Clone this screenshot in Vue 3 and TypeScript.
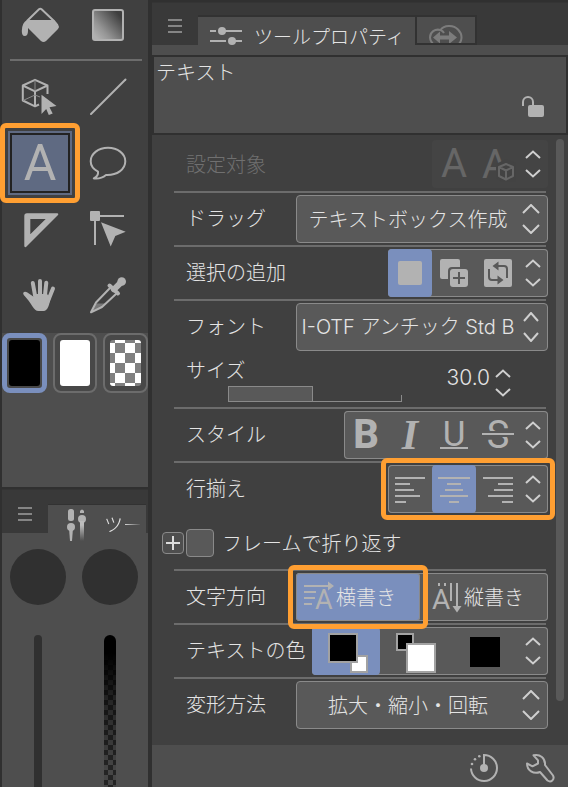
<script setup lang="ts">
import { computed, ref } from 'vue'

type Align = 'left' | 'center' | 'right'

const tool = ref('text')
const swatch = ref('main')
const selectionMode = ref('new')
const align = ref<Align>('center')
const direction = ref<'horizontal' | 'vertical'>('horizontal')
const colorMode = ref('main')
const wrapInFrame = ref(false)
const dragAction = ref('テキストボックス作成')
const font = ref('I-OTF アンチック Std B')
const transformMode = ref('拡大・縮小・回転')
const size = ref(30)
const sliderPosition = ref(49)

const sizeText = computed(() => size.value.toFixed(1))

const alignments: { id: Align; label: string; path: string }[] = [
  { id: 'left', label: '左揃え', path: 'M1 3H31M1 9H16M1 15H20M1 21H26M1 27H12' },
  { id: 'center', label: '中央揃え', path: 'M0 3H32M9 9H23M7 15H25M2 21H30M11 27H21' },
  { id: 'right', label: '右揃え', path: 'M1 3H31M16 9H31M12 15H31M6 21H31M20 27H31' },
]
</script>

<template>
  <div class="workspace">
    <div class="left">
      <section class="toolbox">
        <div class="tools tools-top">
          <button class="tool" aria-label="塗りつぶし">
            <svg class="icon40" viewBox="0 0 40 40">
              <path class="fill" d="M7 15H34.5L38 19.3Q39.8 21.7 38 24L26 36Q23.5 38.2 21 36L8 23V26Q8 31 4.7 31Q1.8 31 1.8 26Q2 17.5 7 15Z" />
              <path class="line" d="M7 16 19 4.300Q20.300 3.200 21.600 4.300L34 16" />
            </svg>
          </button>
          <button class="tool" aria-label="グラデーション">
            <svg class="icon40" viewBox="0 0 40 40">
              <defs>
                <linearGradient id="toolGradient" x1="0.1" y1="0.9" x2="0.9" y2="0.2">
                  <stop offset="0" stop-color="#b0b0b0" />
                  <stop offset="0.3" stop-color="#959595" />
                  <stop offset="1" stop-color="#3e3e3e" />
                </linearGradient>
              </defs>
              <rect x="5" y="5" width="30" height="30" rx="2" fill="url(#toolGradient)" stroke="#b2b2b2" stroke-width="2" />
            </svg>
          </button>
        </div>
        <hr class="divider" />
        <div class="tools">
          <button class="tool" aria-label="3D操作">
            <svg class="icon40" viewBox="0 0 40 40">
              <path class="line" stroke-linejoin="round" d="M27.500 17V8.500L15 2.800 2.800 8.500V23.500L15 29.300 19 27.500M2.800 8.500 15 14.300 27.500 8.500M15 14.300V29" />
              <path class="hair" d="M15 3V14M3 23.500 15 18 20 20" />
              <path class="fill" d="M21.500 17.700 36.500 29 29.500 30.200 32.700 36.500 28.800 38 26.200 32 21.500 37Z" />
            </svg>
          </button>
          <button class="tool" aria-label="直線">
            <svg class="icon40" viewBox="0 0 40 40"><path class="line" stroke-linecap="round" d="M3 37 37.500 2.500" /></svg>
          </button>
          <button class="tool" :class="{ current: tool === 'text', marked: tool === 'text' }" aria-label="テキスト" @click="tool = 'text'">
            <span class="tool-letter">A</span>
          </button>
          <button class="tool" aria-label="フキダシ">
            <svg class="icon40" viewBox="0 0 40 40">
              <path class="line" stroke-linejoin="round" d="M18 32C29 32.500 37.300 26.500 37.300 18.300C37.300 10.500 29.500 4.800 20 4.800S2.700 10.500 2.700 18.300C2.700 22.500 5.500 26.300 10 28.600C10.500 32 8.500 34 5.800 35.400C10 36 15 34.500 18 32Z" />
            </svg>
          </button>
          <button class="tool" aria-label="定規">
            <svg class="icon40" viewBox="0 0 40 40">
              <path class="fill" fill-rule="evenodd" d="M7 4.300H37.500Q39 5 38 6L6 38Q4.300 38.500 4.300 37V7Q4.300 4.300 7 4.300ZM10.300 10V25.300L25.700 10Z" />
            </svg>
          </button>
          <button class="tool" aria-label="オブジェクト">
            <svg class="icon40" viewBox="0 0 40 40">
              <rect class="fill" x="2" y="2" width="10" height="10" rx="1" />
              <path class="line" d="M7 7H36M7 7V36" />
              <path class="fill" d="M13 13.300 37.700 22.700 27.300 27 22.700 37.500Z" />
            </svg>
          </button>
          <button class="tool" aria-label="手のひら">
            <svg class="icon40" viewBox="0 0 40 40">
              <path class="finger" d="M12.800 8 15.300 22M20 6V22M26.300 7.800 24.800 22M33 13.500 28 26" />
              <path class="fill" d="M13.500 19H27L30.500 23C29.500 29 28 36 23.500 36H18.500C13.500 36 12 28.500 3.800 20C2 17.500 4.500 15.800 7 17.300L14 22Z" />
            </svg>
          </button>
          <button class="tool" aria-label="スポイト">
            <svg class="icon40" viewBox="0 0 40 40">
              <path class="shade" d="M8 28.500H17L14 31.500 4 36.500Z" />
              <path class="line" stroke-linejoin="round" d="M22 13 8 27.500 3 37.300 14 32 28.500 18.500" />
              <path d="M26 14.300 34 6.500" stroke="#b2b2b2" stroke-width="6" stroke-linecap="round" />
              <path d="M21.500 10.500 30 18.500" stroke="#b2b2b2" stroke-width="4" stroke-linecap="round" />
              <circle class="fill" cx="33.700" cy="6.500" r="4.300" />
            </svg>
          </button>
        </div>
        <div class="colors">
          <button class="swatch" :class="{ chosen: swatch === 'main' }" aria-label="メインカラー" @click="swatch = 'main'"><span class="chip black"></span></button>
          <button class="swatch" :class="{ chosen: swatch === 'sub' }" aria-label="サブカラー" @click="swatch = 'sub'"><span class="chip white"></span></button>
          <button class="swatch" :class="{ chosen: swatch === 'clear' }" aria-label="透明色" @click="swatch = 'clear'"><span class="chip clear"></span></button>
        </div>
      </section>

      <section class="quick">
        <header class="tabs quick-tabs">
          <button class="menu" aria-label="メニュー"><svg width="14" height="14" viewBox="0 0 14 14"><path d="M0 1H14M0 7H14M0 13H14" /></svg></button>
          <button class="tab quick-tab">
            <svg width="20" height="34" viewBox="0 0 20 34">
              <defs>
                <linearGradient id="fadeDown" x1="0" y1="0" x2="0" y2="1">
                  <stop offset="0.2" stop-color="#bdbdbd" />
                  <stop offset="1" stop-color="#bdbdbd" stop-opacity="0" />
                </linearGradient>
              </defs>
              <rect class="fill" x="2" y="1" width="6" height="12" rx="2.500" />
              <circle class="fill" cx="5" cy="19" r="4" />
              <path class="fill" d="M3 20H7L6 33H4Z" />
              <path class="fill" d="M14 5V3Q16 0 18 3V5Z" />
              <circle class="fill" cx="16" cy="11" r="4" />
              <rect x="14" y="13" width="4" height="20" fill="url(#fadeDown)" />
            </svg>
            <span class="fading">ツー</span>
          </button>
        </header>
        <div class="channels">
          <div class="channel">
            <button class="dial" aria-label="ブラシサイズ"></button>
            <input class="vertical plain" type="range" aria-label="ブラシサイズ" />
          </div>
          <div class="channel">
            <button class="dial" aria-label="不透明度"></button>
            <input class="vertical opacity" type="range" aria-label="不透明度" />
          </div>
        </div>
      </section>
    </div>

    <main class="property">
      <header class="tabs">
        <button class="menu" aria-label="メニュー"><svg width="14" height="14" viewBox="0 0 14 14"><path d="M0 1H14M0 7H14M0 13H14" /></svg></button>
        <button class="tab main-tab">
          <svg width="32" height="20" viewBox="0 0 32 20">
            <path class="line" d="M0 5H6M10 5H32M0 15H16M22 15H32" />
            <circle class="fill" cx="12" cy="5" r="4" />
            <circle class="fill" cx="22" cy="15" r="4" />
          </svg>
          <span>ツールプロパティ</span>
        </button>
        <button class="tab cloud-tab" aria-label="クラウド">
          <svg width="34" height="24" viewBox="0 0 34 24">
            <path fill="none" stroke="#7c7c7c" stroke-width="2" d="M10 21C5 21 1 17 1 12.500C1 7 6 3.500 11.500 5C15 0 24 -.5 29 4.500C35 10.500 33 21 24 21M11.500 5Q14 6 15 8" />
            <path fill="#7c7c7c" d="M4 12.500 11 6.500V10.500H20V6L28 12.500 20 19V14.500H11V18.500Z" />
          </svg>
        </button>
      </header>

      <section class="preview">
        <span class="preview-name">テキスト</span>
        <button class="lock" aria-label="ロック">
          <svg width="24" height="24" viewBox="0 0 24 24">
            <path class="line" d="M2 12V8A5 5 0 0 1 12 8V12" />
            <rect class="fill" x="7" y="11" width="16" height="12" rx="2" />
          </svg>
        </button>
      </section>

      <section class="panel">
        <div class="rows">
          <div class="row first">
            <span class="label off">設定対象</span>
            <div class="group dim">
              <button class="cell letter" disabled>A</button>
              <button class="cell" disabled aria-label="3Dテキスト">
                <svg width="36" height="48" viewBox="0 -6 36 48">
                  <text class="svg-letter" x="2" y="32" font-size="40" fill="#666">A</text>
                  <path fill="#434343" d="M26 13 36 17V36H22L16 32V18Z" />
                  <path fill="none" stroke="#666" stroke-width="2" stroke-linejoin="round" d="M26 18 33 21V30L26 33.500 19 30V21ZM19 21 26 24.500 33 21M26 24.500V33" />
                </svg>
              </button>
              <span class="stepper">
                <button aria-label="前へ"><svg viewBox="0 0 16 9"><path d="M1 8 8 1.500 15 8" /></svg></button>
                <button aria-label="次へ"><svg viewBox="0 0 16 9"><path d="M1 1 8 7.500 15 1" /></svg></button>
              </span>
            </div>
          </div>

          <div class="row">
            <label class="label" for="drag">ドラッグ</label>
            <div class="select-box">
              <select id="drag" v-model="dragAction"><option>テキストボックス作成</option></select>
              <svg class="arrows" viewBox="0 0 18 30"><path d="M1 9 9 1 17 9M1 21 9 29 17 21" /></svg>
            </div>
          </div>

          <div class="row">
            <span class="label">選択の追加</span>
            <div class="group">
              <button class="cell" :class="{ on: selectionMode === 'new' }" aria-label="新規選択" @click="selectionMode = 'new'">
                <svg width="24" height="24" viewBox="0 0 24 24"><rect class="fill" width="24" height="24" rx="2" /></svg>
              </button>
              <button class="cell" :class="{ on: selectionMode === 'add' }" aria-label="追加選択" @click="selectionMode = 'add'">
                <svg width="28" height="28" viewBox="0 0 28 28">
                  <rect class="fill" width="20" height="20" rx="2" />
                  <rect x="8" y="8" width="20" height="20" rx="4" fill="#595959" />
                  <rect class="fill" x="10" y="10" width="18" height="18" rx="3" />
                  <path d="M13 19H25M19 13V25" stroke="#595959" stroke-width="2" />
                </svg>
              </button>
              <button class="cell" :class="{ on: selectionMode === 'toggle' }" aria-label="選択切り替え" @click="selectionMode = 'toggle'">
                <svg width="28" height="28" viewBox="0 0 28 28">
                  <rect class="fill" width="28" height="28" rx="2" />
                  <path d="M13 7H20Q23 7 23 10V19M5 10V18Q5 21 8 21H15" fill="none" stroke="#595959" stroke-width="2" />
                  <path fill="#595959" d="M8.500 7 14.500 2.500V11.500ZM19.500 21 13.500 16.500V25.500Z" />
                </svg>
              </button>
              <span class="stepper">
                <button aria-label="前へ"><svg viewBox="0 0 16 9"><path d="M1 8 8 1.500 15 8" /></svg></button>
                <button aria-label="次へ"><svg viewBox="0 0 16 9"><path d="M1 1 8 7.500 15 1" /></svg></button>
              </span>
            </div>
          </div>

          <div class="row">
            <label class="label" for="font">フォント</label>
            <div class="select-box">
              <select id="font" v-model="font" class="font-select"><option>I-OTF アンチック Std B</option></select>
              <svg class="arrows" viewBox="0 0 18 30"><path d="M2 9 9 1 16 9M2 21 9 29 16 21" /></svg>
            </div>
          </div>

          <div class="row size-row">
            <div class="size-main">
              <label class="label" for="size">サイズ</label>
              <div class="size-track">
                <span class="size-fill" :style="{ width: sliderPosition + '%' }"></span>
                <input id="size" v-model.number="sliderPosition" type="range" min="0" max="100" />
              </div>
            </div>
            <output class="number" for="size">{{ sizeText }}</output>
            <span class="stepper">
              <button aria-label="増やす" @click="size += 1"><svg viewBox="0 0 16 9"><path d="M1 8 8 1.500 15 8" /></svg></button>
              <button aria-label="減らす" @click="size -= 1"><svg viewBox="0 0 16 9"><path d="M1 1 8 7.500 15 1" /></svg></button>
            </span>
          </div>

          <div class="row">
            <span class="label">スタイル</span>
            <div class="group">
              <button class="cell letter bold">B</button>
              <button class="cell letter italic">I</button>
              <button class="cell" aria-label="下線">
                <svg width="32" height="48" viewBox="0 0 32 48">
                  <text class="svg-letter" x="16" y="35" font-size="35" text-anchor="middle" fill="#b2b2b2">U</text>
                  <path class="line" d="M2 37H30" />
                </svg>
              </button>
              <button class="cell" aria-label="取り消し線">
                <svg width="32" height="48" viewBox="0 0 32 48">
                  <text class="svg-letter" x="16" y="37" font-size="38" text-anchor="middle" fill="#b2b2b2">S</text>
                  <path stroke="#595959" stroke-width="6" d="M2 23H30" />
                  <path class="line" d="M0 23H32" />
                </svg>
              </button>
              <span class="stepper">
                <button aria-label="前へ"><svg viewBox="0 0 16 9"><path d="M1 8 8 1.500 15 8" /></svg></button>
                <button aria-label="次へ"><svg viewBox="0 0 16 9"><path d="M1 1 8 7.500 15 1" /></svg></button>
              </span>
            </div>
          </div>

          <div class="row">
            <span class="label">行揃え</span>
            <div class="group marked">
              <button v-for="item in alignments" :key="item.id" class="cell" :class="{ on: align === item.id }" :aria-label="item.label" @click="align = item.id">
                <svg width="32" height="28" viewBox="0 0 32 28"><path class="line" :d="item.path" /></svg>
              </button>
              <span class="stepper">
                <button aria-label="前へ"><svg viewBox="0 0 16 9"><path d="M1 8 8 1.500 15 8" /></svg></button>
                <button aria-label="次へ"><svg viewBox="0 0 16 9"><path d="M1 1 8 7.500 15 1" /></svg></button>
              </span>
            </div>
          </div>

          <div class="row frame-row">
            <button class="expand" aria-label="展開"><svg width="14" height="14" viewBox="0 0 14 14"><path d="M0 7H14M7 0V14" /></svg></button>
            <input id="frame" v-model="wrapInFrame" class="check" type="checkbox" />
            <label for="frame">フレームで折り返す</label>
          </div>

          <div class="row">
            <span class="label">文字方向</span>
            <div class="group wide">
              <button class="way across" :class="{ on: direction === 'horizontal', marked: direction === 'horizontal' }" @click="direction = 'horizontal'">
                <svg width="30" height="48" viewBox="0 -8 30 48">
                  <path class="line" d="M0 5H26M0 11H12M0 17H11M0 23H8" />
                  <path class="fill" d="M24 .5 30 5 24 9.500Z" />
                  <text class="svg-letter" x="11" y="28" font-size="27" fill="#b2b2b2">A</text>
                </svg>
                横書き
              </button>
              <button class="way down" :class="{ on: direction === 'vertical', marked: direction === 'vertical' }" @click="direction = 'vertical'">
                <svg width="30" height="48" viewBox="0 -8 30 48">
                  <path class="line" d="M7 2V5M13 2V5M19 2V20M25 2V27" />
                  <path class="fill" d="M20.500 25H29.500L25 31.500Z" />
                  <text class="svg-letter" x="0" y="28" font-size="28" fill="#b2b2b2">A</text>
                </svg>
                縦書き
              </button>
            </div>
          </div>

          <div class="row">
            <span class="label">テキストの色</span>
            <div class="group color-group">
              <button class="cell" :class="{ on: colorMode === 'main' }" aria-label="メインカラー" @click="colorMode = 'main'">
                <svg width="68" height="48" viewBox="0 0 68 48">
                  <rect x="39" y="29" width="16" height="16" fill="#fff" stroke="#a2a2a2" stroke-width="2" />
                  <rect x="17" y="7" width="28" height="28" fill="#000" stroke="#a2a2a2" stroke-width="2" />
                </svg>
              </button>
              <button class="cell" :class="{ on: colorMode === 'sub' }" aria-label="サブカラー" @click="colorMode = 'sub'">
                <svg width="68" height="48" viewBox="0 0 68 48">
                  <rect x="17" y="7" width="16" height="16" fill="#000" stroke="#a2a2a2" stroke-width="2" />
                  <rect x="27" y="17" width="28" height="28" fill="#fff" stroke="#a2a2a2" stroke-width="2" />
                </svg>
              </button>
              <button class="cell" :class="{ on: colorMode === 'user' }" aria-label="ユーザーカラー" @click="colorMode = 'user'">
                <svg width="68" height="48" viewBox="0 0 68 48"><rect x="22" y="10" width="30" height="30" fill="#000" /></svg>
              </button>
              <span class="stepper">
                <button aria-label="前へ"><svg viewBox="0 0 16 9"><path d="M1 8 8 1.500 15 8" /></svg></button>
                <button aria-label="次へ"><svg viewBox="0 0 16 9"><path d="M1 1 8 7.500 15 1" /></svg></button>
              </span>
            </div>
          </div>

          <div class="row">
            <label class="label" for="transform">変形方法</label>
            <div class="select-box">
              <select id="transform" v-model="transformMode"><option>拡大・縮小・回転</option></select>
              <svg class="arrows" viewBox="0 0 18 30"><path d="M1 9 9 1 17 9M1 21 9 29 17 21" /></svg>
            </div>
          </div>
        </div>
        <div class="scroll"><div class="thumb"></div></div>
      </section>

      <footer class="bottom">
        <button aria-label="初期設定に戻す">
          <svg width="30" height="30" viewBox="0 0 30 30">
            <path class="line" d="M15 15V2A13 13 0 1 1 2 15.500" />
            <circle class="fill" cx="15" cy="15" r="4" />
            <circle class="fill" cx="3" cy="11" r="1.300" /><circle class="fill" cx="6" cy="6.300" r="1.300" /><circle class="fill" cx="10.300" cy="3.200" r="1.300" />
          </svg>
        </button>
        <button aria-label="サブツール詳細">
          <svg width="30" height="30" viewBox="0 0 30 30">
            <path class="line" stroke-linejoin="round" d="M8.500 2.300C15 .8 20.500 5 20 12L28 22.500C30 26.500 26 30 22.500 27.500L15 19C8.500 21.500 2 17.500 2 10.500L7.500 13.300 13 10.500V7.300Z" />
          </svg>
        </button>
      </footer>
    </main>
  </div>
</template>

<style>
body {
  margin: 0;
  background: #303030;
}
</style>

<style scoped>
.workspace {
  display: flex;
  gap: 4px;
  box-sizing: border-box;
  min-height: 100vh;
  padding-left: 2px;
  background: #303030;
  color: #e4e4e4;
  font-family: "Noto Sans CJK JP", sans-serif;
  font-size: 20px;
  font-weight: 300;
  line-height: 24px;
}
button,
select,
input {
  margin: 0;
  padding: 0;
  border: 0;
  background: none;
  color: inherit;
  font: inherit;
}
svg {
  display: block;
  flex: none;
}
.fill {
  fill: #b2b2b2;
}
.line {
  fill: none;
  stroke: #b2b2b2;
  stroke-width: 2;
}
.hair {
  fill: none;
  stroke: #8a8a8a;
  stroke-width: 1;
}
.shade {
  fill: #777;
}
.finger {
  fill: none;
  stroke: #b2b2b2;
  stroke-width: 4;
  stroke-linecap: round;
}
.svg-letter {
  font-family: Roboto, sans-serif;
  font-weight: 400;
}

.left {
  display: flex;
  flex: none;
  flex-direction: column;
  width: 146px;
}
.toolbox {
  background: #404040;
}
.tools {
  display: grid;
  grid-template-columns: repeat(2, 64px);
  gap: 2px 4px;
  padding: 4px 6px 6px;
}
.tools-top {
  padding: 0 6px 9px;
}
.tools-top .tool {
  height: 50px;
}
.divider {
  height: 2px;
  margin: 0 6px 0 8px;
  border: 0;
  background: #6c6c6c;
}
.tool {
  display: flex;
  align-items: center;
  justify-content: center;
  height: 64px;
}
.icon40 {
  width: 40px;
  height: 40px;
}
.tool.current {
  border: 2px solid #5f6a82;
  background: #5f6a82;
  box-shadow: inset 0 0 0 2px #222;
}
.tool-letter {
  color: #b2b2b2;
  font: 400 50px/60px Roboto, sans-serif;
}
.marked {
  position: relative;
}
.marked::after {
  position: absolute;
  z-index: 2;
  inset: -8px;
  border: 5px solid #ff9f32;
  border-radius: 6px;
  content: "";
  pointer-events: none;
}
.tool.marked::after {
  inset: -10px;
}
.group.marked::after {
  inset: -7px;
}

.colors {
  display: flex;
  gap: 6px;
  height: 60px;
  padding-bottom: 94px;
  background: #4e4e4e;
}
.swatch {
  flex: 1;
  box-sizing: border-box;
  padding: 5px;
  border: 2px solid #6c6c6c;
  border-radius: 8px;
  background: #484848;
}
.swatch.chosen {
  padding: 2px;
  border: 5px solid #7a8fbd;
}
.chip {
  display: block;
  height: 100%;
  border-radius: 3px;
}
.black {
  background: #000;
}
.white {
  background: #fff;
}
.clear {
  background: conic-gradient(#808080 25%, #fff 0 50%, #808080 0 75%, #fff 0) -5px 3px / 20px 20px;
}

.quick {
  display: flex;
  flex: 1;
  flex-direction: column;
  margin-top: 3px;
  background: #4e4e4e;
}
.tabs {
  display: flex;
  align-items: flex-end;
  height: 42px;
  margin-top: 3px;
  background: #393939;
  box-shadow: 0 -1px #343434;
}
.quick-tabs {
  height: 43px;
  margin-top: 0;
}
.menu {
  align-self: flex-start;
  width: 46px;
  padding: 16px 16px 0;
}
.quick-tabs .menu {
  padding-top: 17px;
}
.menu svg {
  fill: none;
  stroke: #858585;
  stroke-width: 2;
}
.tab {
  display: flex;
  align-items: center;
  box-sizing: border-box;
  height: 28px;
  background: #4e4e4e;
  font-size: 19px;
}
.main-tab {
  gap: 12px;
  padding: 10px 10px 0 12px;
  box-shadow: 0 -2px #323232, 2px 0 #323232;
}
.cloud-tab {
  align-items: flex-start;
  width: 58px;
  height: 26px;
  margin: 0 0 2px 2px;
  padding: 8px 12px 0;
  overflow: hidden;
  box-shadow: 0 0 0 2px #323232;
}
.quick-tab {
  flex: 1;
  align-items: flex-start;
  gap: 18px;
  margin-right: 2px;
  padding: 3px 0 0 18px;
  box-shadow: 0 -1px #323232;
}
.quick-tab .fading {
  margin-top: 4px;
  mask-image: linear-gradient(90deg, #000 50%, transparent);
}
.channels {
  display: flex;
  flex: 1;
  gap: 16px;
  padding: 16px 8px 0;
}
.channel {
  display: flex;
  flex: none;
  flex-direction: column;
  align-items: center;
  gap: 30px;
  width: 56px;
}
.dial {
  width: 56px;
  height: 56px;
  border-radius: 50%;
  background: #303030;
}
.vertical {
  flex: 1;
  appearance: none;
  min-height: 120px;
  border-radius: 6px 6px 0 0;
  writing-mode: vertical-lr;
}
.vertical::-webkit-slider-thumb,
.size-track input::-webkit-slider-thumb {
  appearance: none;
  width: 8px;
  height: 8px;
  background: transparent;
}
.plain {
  width: 8px;
  background: #303030;
}
.opacity {
  width: 12px;
  background:
    linear-gradient(#000 12%, rgba(0, 0, 0, 0.5) 45%, rgba(0, 0, 0, 0.1) 90%),
    conic-gradient(#282828 25%, #4e4e4e 0 50%, #282828 0 75%, #4e4e4e 0) -1px 0 / 10px 10px;
}

.property {
  display: flex;
  flex: 1;
  flex-direction: column;
  min-width: 0;
}
.preview {
  display: flex;
  align-items: flex-start;
  justify-content: space-between;
  height: 76px;
  margin-top: 10px;
  border: 2px solid #303030;
  background: #4e4e4e;
  box-shadow: 0 -10px #4e4e4e;
}
.preview-name {
  padding: 3px 2px;
}
.lock {
  align-self: flex-end;
  padding: 0 21px 15px 0;
}
.panel {
  display: flex;
  flex: 1;
  gap: 10px;
  padding: 2px 4px 14px 22px;
  background: #404040;
}
.rows {
  flex: 1;
  min-width: 0;
}
.row {
  display: flex;
  align-items: center;
  justify-content: space-between;
  box-sizing: border-box;
  height: 54px;
  padding: 2px 0;
  border-top: 2px solid #6c6c6c;
}
.row.first,
.row.size-row,
.row.frame-row {
  border-color: transparent;
}
.label {
  flex: none;
  padding: 0 0 2px 12px;
  white-space: nowrap;
}
.off {
  color: #707070;
}
.group {
  display: flex;
  flex: none;
  height: 48px;
  margin-right: -2px;
  border-radius: 4px;
  background: #595959;
  box-shadow: inset 0 0 0 1px #8a8a8a;
}
.dim {
  background: #444;
  box-shadow: none;
}
.row.first .group {
  margin-top: -2px;
}
.cell {
  display: flex;
  align-items: center;
  justify-content: center;
  width: 44px;
  border-radius: 4px;
}
.on {
  background: #7a8fbd;
}
.letter {
  color: #b2b2b2;
  font: 400 40px/48px Roboto, sans-serif;
}
.dim .letter {
  color: #666;
}
.bold {
  font-weight: 800;
}
.italic {
  font-family: "Liberation Serif", serif;
  font-size: 42px;
  font-style: italic;
  font-weight: 700;
}
.stepper {
  display: flex;
  flex: none;
  flex-direction: column;
  align-items: center;
  justify-content: center;
  gap: 10px;
  width: 26px;
  padding-right: 2px;
}
.stepper svg {
  width: 16px;
  height: 9px;
}
.stepper path,
.arrows path {
  fill: none;
  stroke: #cfcfcf;
  stroke-width: 2;
}
.select-box {
  position: relative;
  flex: 0 1 252px;
  height: 48px;
  margin-right: -2px;
}
.select-box select {
  width: 100%;
  height: 48px;
  padding-right: 28px;
  border: 1px solid #8a8a8a;
  border-radius: 4px;
  background: #595959;
  appearance: none;
  text-align: center;
  text-align-last: center;
}
.select-box .font-select {
  font-family: Inter, "Noto Sans CJK JP", sans-serif;
}
.arrows {
  position: absolute;
  top: 9px;
  right: 8px;
  width: 18px;
  height: 30px;
  pointer-events: none;
}
.row.size-row {
  padding-bottom: 4px;
}
.size-main {
  flex: 1;
}
.size-main .label {
  display: block;
  padding-bottom: 4px;
}
.size-track {
  position: relative;
  box-sizing: border-box;
  width: 174px;
  height: 16px;
  margin-left: 54px;
  border-bottom: 1px solid #8a8a8a;
  background: linear-gradient(#8a8a8a, #8a8a8a) right bottom / 1px 6px no-repeat;
}
.size-fill {
  display: block;
  box-sizing: border-box;
  height: 15px;
  border: 1px solid #8a8a8a;
  border-bottom: 0;
  background: #595959;
}
.size-track input {
  position: absolute;
  inset: 0;
  width: 100%;
  appearance: none;
}
.number {
  padding-bottom: 4px;
  font-family: Inter, sans-serif;
  font-size: 21px;
}
.size-row .stepper {
  margin: 6px 30px 0 0;
  padding: 0;
}
.frame-row {
  justify-content: flex-start;
  gap: 2px;
  margin-left: -12px;
}
.frame-row label {
  padding: 0 0 0 6px;
}
.expand {
  display: flex;
  align-items: center;
  justify-content: center;
  box-sizing: border-box;
  width: 22px;
  height: 22px;
  border: 1px solid #8a8a8a;
  border-radius: 4px;
  background: #4e4e4e;
}
.expand path {
  stroke: #dcdcdc;
  stroke-width: 2;
}
.check {
  appearance: none;
  box-sizing: border-box;
  width: 28px;
  height: 28px;
  border: 1px solid #8a8a8a;
  border-radius: 4px;
  background: #595959;
}
.check:checked {
  background: #7a8fbd;
}
.wide {
  width: 252px;
}
.way {
  display: flex;
  align-items: center;
  gap: 2px;
  border-radius: 4px;
}
.way.on {
  box-shadow: inset 0 0 0 1px #8a8a8a;
}
.across {
  width: 124px;
  padding-left: 8px;
}
.down {
  flex: 1;
  padding-left: 12px;
}
.color-group {
  width: 236px;
}
.color-group .cell {
  flex: none;
  width: 68px;
}
.color-group .stepper {
  margin-left: auto;
}
.scroll {
  flex: none;
  width: 8px;
  padding-top: 2px;
}
.thumb {
  height: 95%;
  border-radius: 4px;
  background: #595959;
}
.bottom {
  display: flex;
  align-items: center;
  justify-content: flex-end;
  gap: 26px;
  box-sizing: border-box;
  height: 42px;
  padding: 4px 13px 0 0;
  background: #4e4e4e;
}
</style>
